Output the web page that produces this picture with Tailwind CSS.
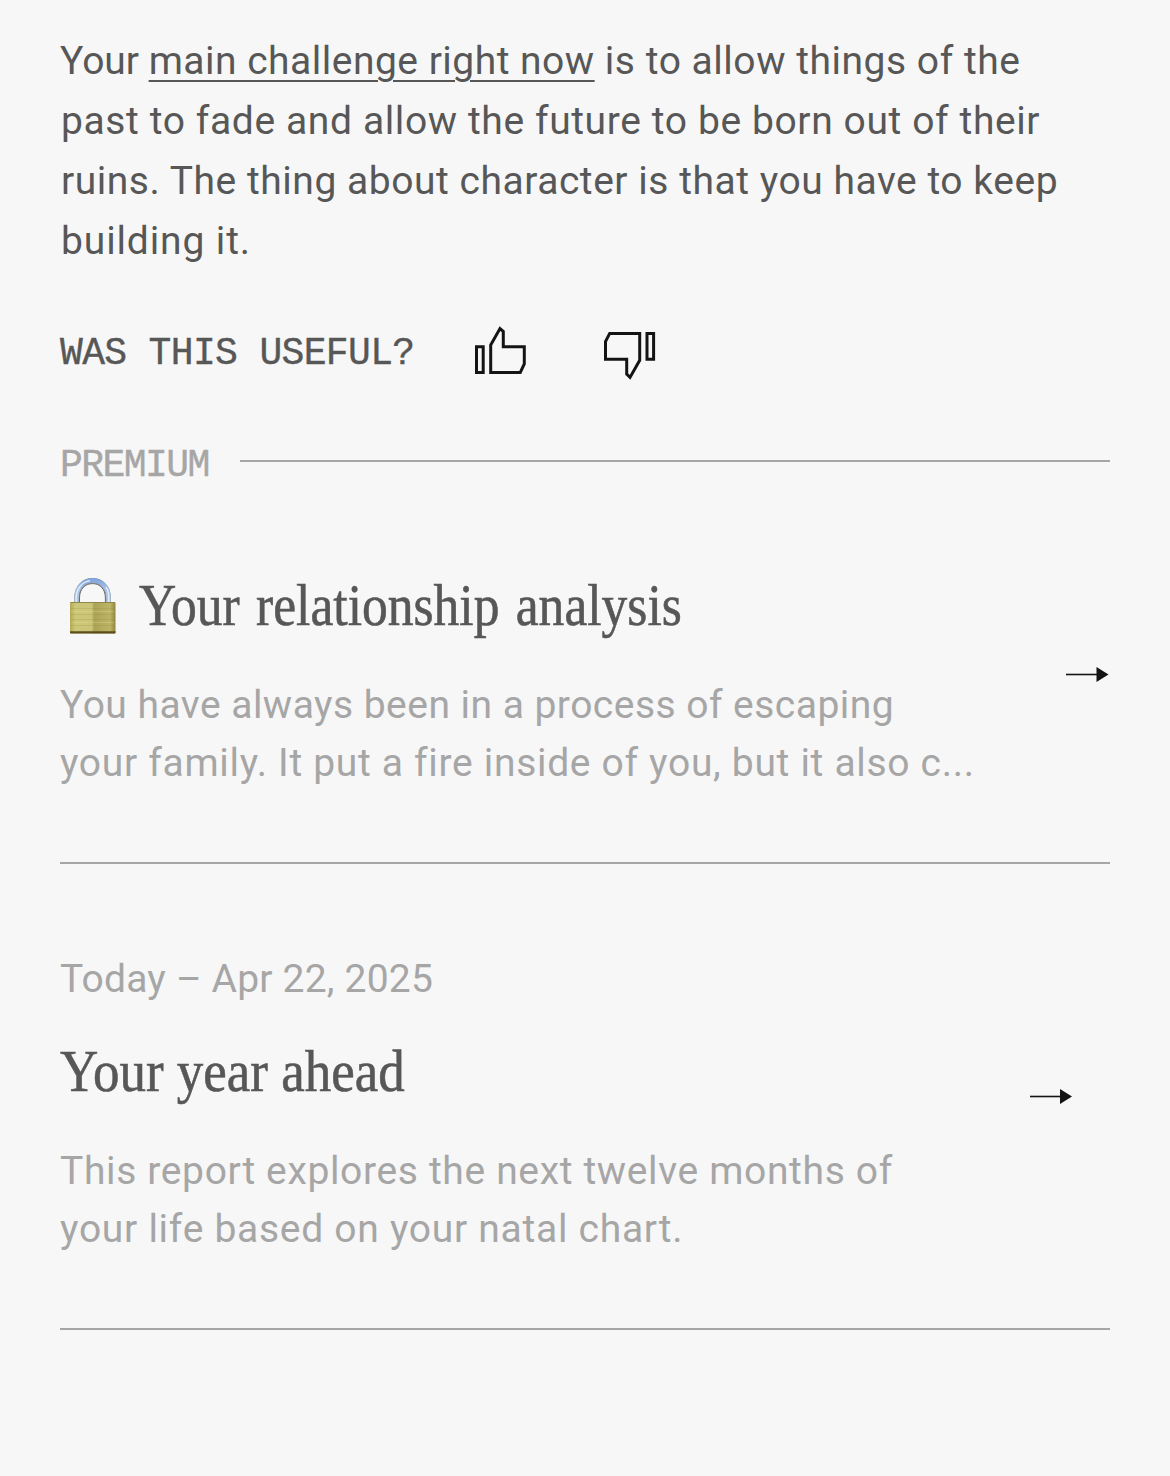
<!DOCTYPE html>
<html lang="en">
<head>
<meta charset="utf-8">
<title>Premium</title>
<script src="https://cdn.jsdelivr.net/npm/@tailwindcss/browser@4"></script>
</head>
<body class="min-h-screen bg-[#f7f7f7] px-[60px] pt-[31px] font-['Roboto',sans-serif] text-[39px] text-[#575757]">
<main>
  <p class="leading-[60px] whitespace-nowrap">
    <span class="block tracking-[0.53px]"><span class="tracking-[-0.04px]">Your </span><a class="tracking-[0.49px] underline decoration-2 underline-offset-[6px]">main challenge right now</a> is to allow things of the</span>
    <span class="block pl-px tracking-[0.61px]">past to fade and allow the future to be born out of their</span>
    <span class="block pl-px tracking-[0.53px]">ruins. The thing about character is that you have to keep</span>
    <span class="block pl-px tracking-[0.87px]">building it.</span>
  </p>

  <div class="mt-[51px] flex h-[60px] items-center">
    <span class="w-[408px] pt-[4px] font-['Liberation_Mono',monospace] text-[38px] leading-[60px] tracking-[-0.65px] whitespace-nowrap [-webkit-text-stroke:0.4px]">WAS THIS USEFUL?</span>
    <svg class="ml-[6px] h-[60px] w-[54px]" viewBox="474 322 54 60" fill="none" stroke="#141414" stroke-width="3">
      <path d="M476.5 346.8H483.2V372.4H476.5Z"/>
      <path d="M490.7 345L500 328.6L503.3 331.5V346.8H524.3V364L520.3 372.4H490.7Z"/>
    </svg>
    <svg class="ml-[74px] h-[60px] w-[56px]" viewBox="602 322 56 60" fill="none" stroke="#141414" stroke-width="3">
      <path d="M609.7 333.4H639.7V360.3L630 377.4L626.7 374.2V359.2H605.5V341.5Z"/>
      <path d="M647 333.4H653.6V359.2H647Z"/>
    </svg>
  </div>

  <div class="mt-[53px] flex h-[52px] items-center text-[#a6a6a6]">
    <span class="w-[180px] pt-[10px] font-['Liberation_Mono',monospace] text-[38px] leading-[52px] tracking-[-1.55px] [-webkit-text-stroke:0.4px]">PREMIUM</span>
    <span class="h-[2px] flex-1 bg-[#a6a6a6]"></span>
  </div>

  <article class="mt-[87px] flex h-[290px] justify-between border-b-2 border-[#a6a6a6]">
    <div>
      <div class="flex h-[60px]">
        <svg class="ml-[8px] mt-[2px] h-[60px] w-[50px]" viewBox="0 0 50 60">
          <defs>
            <linearGradient id="brass" x1="0" x2="1" y1="0" y2="0">
              <stop offset="0" stop-color="#b3a955"/><stop offset=".12" stop-color="#cdc878"/><stop offset=".48" stop-color="#c9c477"/><stop offset=".53" stop-color="#aba357"/><stop offset=".88" stop-color="#bdb565"/><stop offset="1" stop-color="#8f8541"/>
            </linearGradient>
            <linearGradient id="steel" x1="0" x2="0" y1="0" y2="1">
              <stop offset="0" stop-color="#84a8e0"/><stop offset=".4" stop-color="#a9c5ee"/><stop offset="1" stop-color="#bccbd8"/>
            </linearGradient>
          </defs>
          <path d="M8.8 27V22C8.8 11 16 4.7 24.5 4.7S40.3 11 40.3 22V27" fill="none" stroke="#75818f" stroke-width="5.2"/>
          <path d="M8.6 27V22C8.6 11 16 4.5 24.5 4.5S40.5 11 40.5 22V27" fill="none" stroke="url(#steel)" stroke-width="4.4"/>
          <path d="M8.2 27V22C8.2 12.5 14 6 22 4.7M40.8 27V22C40.8 17 39.8 13.5 38 11" fill="none" stroke="#e4eefb" stroke-width="1.3"/>
          <path d="M11.5 27V22C11.5 13 17 7.6 24.5 7.6S37.4 13 37.4 22V27" fill="none" stroke="#75695d" stroke-width="1"/>
          <rect x="2" y="26" width="45.5" height="31.6" rx="1" fill="url(#brass)"/>
          <path d="M2.5 26.5H47" stroke="#8f884a"/>
          <path d="M3 32.5H46M3 38.5H46M3 43.5H46M3 49.5H46" stroke="#908a37" stroke-opacity=".22"/>
          <path d="M3 35.5H46M3 46.5H46" stroke="#eee995" stroke-opacity=".25"/>
          <path d="M2 55.2H47.5V56.8Q47.5 57.6 46.5 57.6H3Q2 57.6 2 56.8Z" fill="#5e4d1c"/>
        </svg>
        <h2 class="mt-px ml-[21px] origin-left scale-x-[0.859] font-['Liberation_Serif',serif] text-[60px] leading-[60px] whitespace-nowrap [word-spacing:4px] [-webkit-text-stroke:0.6px]">Your relationship analysis</h2>
      </div>
      <p class="mt-[42px] leading-[58px] whitespace-nowrap text-[#a6a6a6]">
        <span class="block tracking-[0.47px]">You have always been in a process of escaping</span>
        <span class="block tracking-[0.69px]">your family. It put a fire inside of you, but it also c...</span>
      </p>
    </div>
    <svg class="mt-[92px] h-[16px] w-[44px] shrink-0" viewBox="0 0 44 16">
      <path d="M0 8.5H32" stroke="#141414" stroke-width="1.6"/>
      <path d="M30.5 1L42.5 8.5L30.5 16Z" fill="#141414"/>
    </svg>
  </article>

  <article class="mt-[86px] flex h-[380px] justify-between border-b-2 border-[#a6a6a6]">
    <div>
      <p class="leading-[58px] tracking-[0.2px] text-[#a6a6a6]">Today – Apr 22, 2025</p>
      <h2 class="mt-[33px] origin-left scale-x-[0.883] font-['Liberation_Serif',serif] text-[60px] leading-[60px] whitespace-nowrap [-webkit-text-stroke:0.6px]">Your year ahead</h2>
      <p class="mt-[41px] leading-[58px] whitespace-nowrap text-[#a6a6a6]">
        <span class="block tracking-[0.65px]">This report explores the next twelve months of</span>
        <span class="block tracking-[0.72px]">your life based on your natal chart.</span>
      </p>
    </div>
    <svg class="mt-[138px] mr-[36px] h-[16px] w-[44px] shrink-0" viewBox="0 0 44 16">
      <path d="M0 8.5H32" stroke="#141414" stroke-width="1.6"/>
      <path d="M30 1L42 8.5L30 16Z" fill="#141414"/>
    </svg>
  </article>
</main>
</body>
</html>
